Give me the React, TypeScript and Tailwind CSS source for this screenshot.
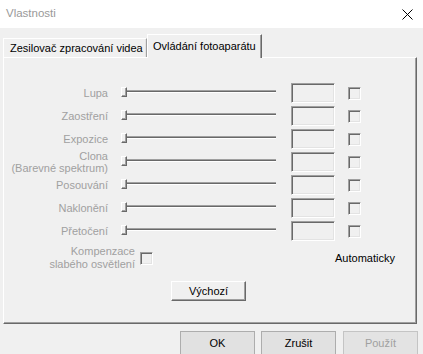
import React from "react";

const sunken =
  "border border-t-[#a0a0a0] border-l-[#a0a0a0] border-r-white border-b-white shadow-[inset_1px_1px_0_#696969,inset_-1px_-1px_0_#e3e3e3] bg-[#f0f0f0]";

function Slider() {
  return (
    <div className="relative ml-[13px] w-[155px] h-[20px] shrink-0">
      <div className="absolute left-0 right-0 top-[7px] flex flex-col">
        <div className="h-[1px] bg-[#a0a0a0]" />
        <div className="h-[1px] bg-[#696969]" />
        <div className="h-[1px] bg-white" />
      </div>
      <div className="absolute left-0 top-[4px] w-[6px] h-[10px] bg-[#f0f0f0] border border-t-white border-l-white border-r-[#696969] border-b-[#696969] shadow-[inset_-1px_-1px_0_#a0a0a0]" />
    </div>
  );
}

function Row({ label }: { label: React.ReactNode }) {
  return (
    <div className="flex h-[23px] shrink-0">
      <div className="w-[104px] h-[20px] flex items-center justify-end text-right leading-[12.5px] text-[#a0a0a0] whitespace-nowrap">
        <div>{label}</div>
      </div>
      <Slider />
      <div className={`ml-[15px] w-[44px] h-[20px] shrink-0 ${sunken}`} />
      <div className={`ml-[13px] mt-[4px] w-[13px] h-[13px] shrink-0 ${sunken}`} />
    </div>
  );
}

export default function App() {
  return (
    <div
      className="w-[423px] h-[354px] bg-[#f0f0f0] overflow-hidden text-[11px] text-black"
      style={{ fontFamily: '"Liberation Sans", Arial, sans-serif' }}
    >
      <div className="h-[28px] bg-white flex items-center justify-between pl-[6px] pr-[10px]">
        <span className="text-[11.5px] text-[#999999]">Vlastnosti</span>
        <svg width="11" height="11" viewBox="0 0 11 11" className="mr-[0px]">
          <path d="M0.5 0.5 L10.5 10.5 M10.5 0.5 L0.5 10.5" stroke="#000" strokeWidth="1" fill="none" />
        </svg>
      </div>

      <div className="pl-[3px] pt-[6px]">
        <div className="flex items-end h-[23px] relative z-10">
          <div className="w-[144px] h-[19px] flex items-center pl-[6px] border-t border-l border-r border-t-white border-l-white border-r-[#a0a0a0] shadow-[inset_-1px_0_0_#e3e3e3] whitespace-nowrap">
            Zesilovač zpracování videa
          </div>
          <div className="w-[115px] h-[24px] mb-[-1px] flex items-center pl-[5px] pb-[1px] bg-[#f0f0f0] border-t border-l border-r border-t-white border-l-white border-r-[#696969] shadow-[inset_-1px_0_0_#a0a0a0] whitespace-nowrap">
            Ovládání fotoaparátu
          </div>
        </div>

        <div className="w-[414px] h-[267px] border border-t-white border-l-white border-r-[#696969] border-b-[#696969] shadow-[inset_-1px_-1px_0_#a0a0a0] pt-[25px] flex flex-col">
          <Row label="Lupa" />
          <Row label="Zaostření" />
          <Row label="Expozice" />
          <Row
            label={
              <>
                <div>Clona</div>
                <div>(Barevné spektrum)</div>
              </>
            }
          />
          <Row label="Posouvání" />
          <Row label="Naklonění" />
          <Row label="Přetočení" />

          <div className="flex items-center h-[26px] mt-[1px]">
            <div className="w-[131px] text-right leading-[13px] text-[#a0a0a0] whitespace-nowrap">
              <div>Kompenzace</div>
              <div>slabého osvětlení</div>
            </div>
            <div className={`ml-[5px] w-[13px] h-[13px] shrink-0 ${sunken}`} />
            <div className="ml-[182px] whitespace-nowrap">Automaticky</div>
          </div>

          <div className="mt-[10px] ml-[167px] w-[75px] h-[20px] flex items-center justify-center bg-[#f0f0f0] border border-t-white border-l-white border-r-[#696969] border-b-[#696969] shadow-[inset_-1px_-1px_0_#a0a0a0]">
            Výchozí
          </div>
        </div>

        <div className="flex mt-[7px] pl-[177px]">
          <div className="w-[75px] h-[24px] flex items-center justify-center bg-[#e1e1e1] border border-[#adadad]">
            OK
          </div>
          <div className="ml-[6px] w-[75px] h-[24px] flex items-center justify-center bg-[#e1e1e1] border border-[#adadad]">
            Zrušit
          </div>
          <div className="ml-[7px] w-[75px] h-[24px] flex items-center justify-center bg-[#e3e3e3] border border-[#c4c4c4] text-[#a0a0a0]">
            Použít
          </div>
        </div>
      </div>
    </div>
  );
}
